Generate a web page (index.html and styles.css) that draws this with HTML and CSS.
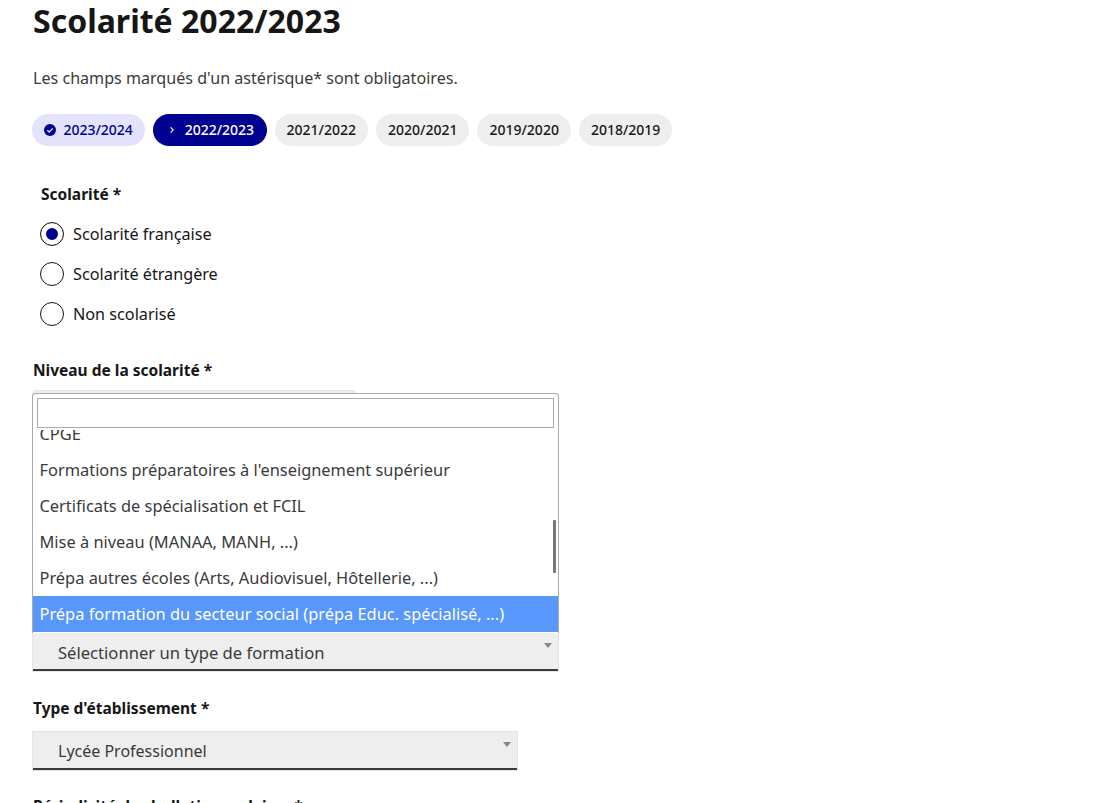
FILE: index.html
```html
<!DOCTYPE html>
<html lang="fr">
<head>
<meta charset="utf-8">
<title>Scolarité 2022/2023</title>
<link rel="stylesheet" href="styles.css">
</head>
<body>
<main class="page">
  <h1 class="title">Scolarité 2022/2023</h1>
  <p class="intro">Les champs marqués d'un astérisque* sont obligatoires.</p>
  <nav class="tags">
    <span class="tag tag-done">
      <svg class="tag-icon" viewBox="0 0 12 12" width="12" height="12"><circle cx="6" cy="6" r="6" fill="#000091"/><path d="M3.3 6.2 5.2 8 8.8 4.4" fill="none" stroke="#e3e3fd" stroke-width="1.3"/></svg>
      2023/2024</span>
    <span class="tag tag-current">
      <svg class="tag-icon" viewBox="0 0 12 12" width="12" height="12"><path d="M4.6 3.4 7.2 6 4.6 8.6" fill="none" stroke="#fff" stroke-width="1.1"/></svg>
      2022/2023</span>
    <span class="tag">2021/2022</span>
    <span class="tag">2020/2021</span>
    <span class="tag">2019/2020</span>
    <span class="tag">2018/2019</span>
  </nav>

  <fieldset class="radios">
    <legend class="label">Scolarité *</legend>
    <div class="radio"><span class="dot dot-on"></span>Scolarité française</div>
    <div class="radio"><span class="dot"></span>Scolarité étrangère</div>
    <div class="radio"><span class="dot"></span>Non scolarisé</div>
  </fieldset>

  <div class="level">
    <div class="label">Niveau de la scolarité *</div>
    <div class="select select-level"></div>
    <div class="select select-wide"><span>Sélectionner un type de formation</span><i class="caret"></i></div>
    <div class="dropdown">
      <div class="search"></div>
      <ul class="options">
        <li>CPGE</li>
        <li>Formations préparatoires à l'enseignement supérieur</li>
        <li>Certificats de spécialisation et FCIL</li>
        <li>Mise à niveau (MANAA, MANH, ...)</li>
        <li>Prépa autres écoles (Arts, Audiovisuel, Hôtellerie, ...)</li>
        <li class="active">Prépa formation du secteur social (prépa Educ. spécialisé, ...)</li>
      </ul>
      <div class="thumb"></div>
    </div>
  </div>

  <div class="label">Type d'établissement *</div>
  <div class="select select-type"><span>Lycée Professionnel</span><i class="caret"></i></div>
  <div class="label label-last">Périodicité des bulletins scolaires *</div>
</main>
</body>
</html>
```

FILE: styles.css
```css
* { box-sizing: border-box; }
html, body { margin: 0; height: 803px; overflow: hidden; background: #fff; }
body { font-family: "Noto Sans", "Liberation Sans", sans-serif; color: #161616; font-size: 16px; }
.page { padding: 0 0 0 32px; }
.title { margin: 0; padding: 1px 0 0 1px; font-size: 32px; line-height: 40px; font-weight: 700; }
.intro { margin: 25px 0 0; padding-left: 1px; line-height: 24px; color: #3a3a3a; font-size: 16.1px; }
.tags { display: flex; gap: 8px; margin-top: 24px; }
.tag { display: flex; align-items: center; gap: 7px; height: 32px; padding: 0 12px 1px; border-radius: 16px; background: #eee; font-size: 14px; font-weight: 500; color: #161616; }
.tag-done { background: #e3e3fd; color: #000091; padding: 0 12.4px 1px; }
.tag-current { background: #000091; color: #fff; padding: 0 12.4px 1px; }
.tag-icon { flex: none; }
.radios { border: 0; margin: 36px 0 0; padding: 0 0 0 8px; }
.label { font-weight: 700; font-size: 15.5px; line-height: 24px; padding: 0 0 0 1px; color: #161616; }
.radios .label { margin-bottom: 16px; }
.radio { display: flex; align-items: center; gap: 9px; height: 24px; margin-bottom: 16px; font-size: 16.2px; }
.dot { width: 24px; height: 24px; border-radius: 50%; border: 1px solid #161616; background: #fff; flex: none; }
.dot-on { box-shadow: inset 0 0 0 5px #fff, inset 0 0 0 12px #000091; }
.level { position: relative; margin-top: 16px; height: 338px; }
.select { background: #eee; border: 1px solid #e5e5e5; box-shadow: inset 0 -2px 0 #3a3a3a; position: relative; color: #3a3a3a; }
.select-level { width: 324px; height: 40px; margin-top: 8px; border-radius: 4px 4px 0 0; }
.select-wide { width: 527px; height: 42px; margin-top: 200px; padding: 10px 0 0 25px; line-height: 24px; font-size: 16.6px; }
.select-type { width: 486px; height: 40px; margin-top: 11px; padding: 7px 0 0 25px; line-height: 24px; font-size: 16px; }
.caret { position: absolute; right: 6px; top: 10px; width: 0; height: 0; border-left: 4px solid transparent; border-right: 4px solid transparent; border-top: 5px solid #888; }
.select-wide .caret { top: 12px; }
.dropdown { position: absolute; left: 0; top: 35px; width: 527px; height: 240px; background: #fff; border: 1px solid #aaa; border-bottom: 0; border-radius: 4px 4px 0 0; overflow: hidden; }
.search { margin: 4px 4px 2px; height: 30px; border: 1px solid #aaa; background: #fff; }
.options { list-style: none; margin: 0; padding: 0; height: 203px; overflow: hidden; }
.options li { height: 36px; padding: 0 6.5px; line-height: 36px; color: #3a3a3a; font-size: 16.4px; white-space: nowrap; }
.options li:first-child { margin-top: -14px; }
.options li.active { background: #5897fb; color: #fff; }
.thumb { position: absolute; right: 2px; top: 126px; width: 3px; height: 53px; background: #777; border-radius: 1px; }
.label-last { margin-top: 23px; }
```
